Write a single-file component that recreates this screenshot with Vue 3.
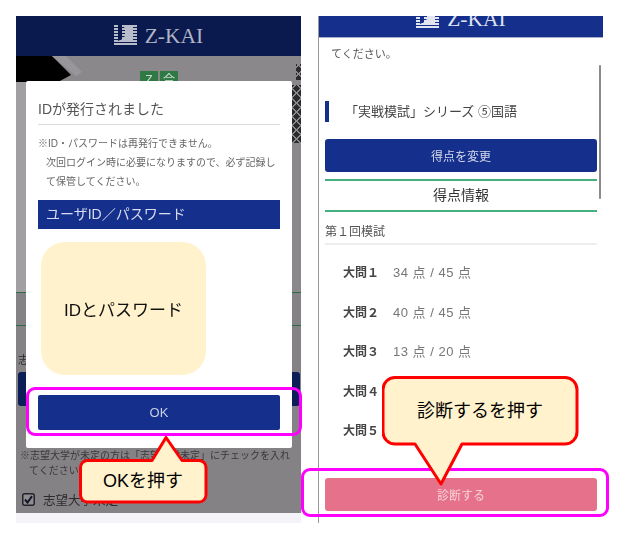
<script setup>
const scores = [
  { name: '大問１', value: '34 点 / 45 点' },
  { name: '大問２', value: '40 点 / 45 点' },
  { name: '大問３', value: '13 点 / 20 点' },
  { name: '大問４', value: '' },
  { name: '大問５', value: '' },
]
const stripes = [0, 3, 6, 9, 12, 15, 18]
</script>

<template>
  <main class="page">
    <section class="phone left">
      <header class="head dark">
        <svg class="logo" viewBox="0 0 23 22">
          <rect v-for="y in stripes" :key="y" x="0" :y="y" width="23" height="2" fill="#b9bcca" />
          <path d="M4 0h4v14l-4 2z" fill="#0a1a4e" />
          <path d="M9 0h10v15H7l4-4V4z" fill="#b9bcca" />
        </svg>
        <span class="brand">Z-KAI</span>
      </header>
      <div class="behind">
        <div class="hero">
          <div class="black"></div>
          <div class="streak"></div>
          <div class="side"></div>
          <div class="badges"><span>Z</span><span>合</span></div>
          <div class="keys top"></div>
          <div class="keys"></div>
        </div>
        <div class="hline"></div>
        <div class="hline second"></div>
        <p class="shi">志望大学</p>
        <div class="navy"></div>
        <p class="note">※志望大学が未定の方は「志望大学未定」にチェックを入れてください</p>
        <div class="check">
          <svg class="box" viewBox="0 0 13 13">
            <rect x="0.75" y="0.75" width="11.5" height="11.5" rx="2" fill="#8f8d90" stroke="#23242c" stroke-width="1.5" />
            <path d="M3 6.5l2.5 3L10 3.2" fill="none" stroke="#15182a" stroke-width="2" />
          </svg>
          <span>志望大学未定</span>
        </div>
      </div>
      <div class="foot"></div>
      <div class="modal">
        <h2>IDが発行されました</h2>
        <p class="info">※ID・パスワードは再発行できません。</p>
        <p class="info indent">次回ログイン時に必要になりますので、必ず記録して保管してください。</p>
        <div class="bar">ユーザID／パスワード</div>
        <div class="secret">IDとパスワード</div>
        <button class="ok">OK</button>
      </div>
    </section>

    <section class="phone right">
      <header class="head blue">
        <svg class="logo" viewBox="0 0 23 22">
          <rect v-for="y in stripes" :key="y" x="0" :y="y" width="23" height="2" fill="#e3e6f0" />
          <path d="M4 0h4v14l-4 2z" fill="#15308c" />
          <path d="M9 0h10v15H7l4-4V4z" fill="#e3e6f0" />
        </svg>
        <span class="brand light">Z-KAI</span>
      </header>
      <div class="scroll">
        <p class="cut">てください。</p>
        <h3 class="series">「実戦模試」シリーズ ⑤国語</h3>
        <button class="change">得点を変更</button>
        <div class="score-title">得点情報</div>
        <div class="round">第１回模試</div>
        <ul class="scores">
          <li v-for="s in scores" :key="s.name"><b>{{ s.name }}</b><span>{{ s.value }}</span></li>
        </ul>
        <button class="diag">診断する</button>
        <i class="thumb"></i>
      </div>
    </section>

    <div class="mark mark-ok"></div>
    <div class="mark mark-diag"></div>

    <div class="callout call-ok">
      <svg viewBox="0 0 130 70" width="130" height="70">
        <path d="M8.5 24.5H73L87 1.5L103 24.5H120a7 7 0 0 1 7 7V59a7 7 0 0 1-7 7H8.5a7 7 0 0 1-7-7V31.5a7 7 0 0 1 7-7z" fill="#fff2cc" stroke="#ff0000" stroke-width="3" stroke-linejoin="round" />
      </svg>
      <span>OKを押す</span>
    </div>
    <div class="callout call-diag">
      <svg viewBox="0 0 198 112" width="198" height="112">
        <path d="M13 1.5H183a12 12 0 0 1 12 12V56a12 12 0 0 1-12 12H80L59 108L33 68H13a12 12 0 0 1-12-12V13.5a12 12 0 0 1 12-12z" fill="#fff2cc" stroke="#ff0000" stroke-width="3" stroke-linejoin="round" />
      </svg>
      <span>診断するを押す</span>
    </div>
  </main>
</template>

<style scoped>
.page {
  position: relative;
  width: 629px;
  height: 534px;
  display: flex;
  gap: 17px;
  padding: 16px 0 0 16px;
  box-sizing: border-box;
  background: #fff;
  overflow: hidden;
  font-family: "Liberation Sans", "Noto Sans CJK JP", sans-serif;
  color: #555;
}
.phone {
  position: relative;
  width: 285px;
  height: 507px;
  display: flex;
  flex-direction: column;
  box-sizing: border-box;
  overflow: hidden;
}
.head {
  display: flex;
  align-items: center;
  justify-content: center;
  gap: 8px;
  flex: none;
  box-sizing: border-box;
  overflow: hidden;
}
.dark { height: 40px; background: #0a1a4e; }
.blue { height: 22px; padding: 0 0 16px 0; background: #15308c; border-bottom: 1px solid #a9afc8; }
.logo { width: 23px; height: 22px; flex: none; }
.brand {
  font-family: "Liberation Serif", serif;
  font-size: 21.5px;
  line-height: 24px;
  color: #b0b4c4;
  flex: none;
}
.light { color: #dfe2ee; }

.behind {
  flex: 1;
  background: #848285;
  display: flex;
  flex-direction: column;
  filter: blur(0.3px);
}
.hero { position: relative; height: 236px; flex: none; overflow: hidden; background: #8a888b; }
.black {
  position: absolute; left: 0; top: 0;
  width: 55px; height: 26px;
  background: #000;
  clip-path: polygon(0 0, 36px 0, 55px 19px, 42px 26px, 0 26px);
}
.streak {
  position: absolute; left: 36px; top: 0;
  width: 30px; height: 26px;
  background: #98969a;
  clip-path: polygon(0 0, 14px 0, 30px 16px, 24px 20px);
}
.side { position: absolute; left: 0; top: 26px; width: 10px; height: 210px; background: #a19fa2; }
.badges { position: absolute; left: 124px; top: 15px; display: flex; gap: 2px; }
.badges span {
  width: 18px; height: 18px;
  background: #2f7a44;
  color: #cfd8cf;
  font-size: 12px;
  line-height: 18px;
  text-align: center;
}
.keys {
  position: absolute; right: 0; top: 29px;
  width: 9px; height: 58px;
  background:
    repeating-linear-gradient(45deg, transparent 0 5px, #8a888b 5px 6.5px),
    repeating-linear-gradient(-45deg, transparent 0 5px, #8a888b 5px 6.5px),
    #2b2a2c;
}
.keys.top { top: 8px; height: 16px; width: 5px; }
.hline { height: 1px; background: #2f6b47; flex: none; }
.second { margin-top: 32px; }
.shi { margin: 27px 0 0 2px; font-size: 11px; line-height: 14px; color: #2b2a2c; white-space: nowrap; overflow: hidden; height: 14px; }
.navy { margin: 5px 1px 0 2px; height: 34px; background: #0b1e57; border-radius: 3px; flex: none; }
.note {
  margin: 42px 6px 0 4px;
  padding-left: 9px;
  text-indent: -9px;
  font-size: 10px;
  line-height: 15px;
  color: #3a383a;
}
.check { display: flex; align-items: center; gap: 8px; margin: 12px 0 0 6px; font-size: 12.5px; color: #2d2b2d; }
.box { width: 13px; height: 13px; flex: none; }
.foot { height: 10px; background: #f5f3f8; flex: none; }

.modal {
  position: absolute;
  left: 10px;
  top: 65px;
  width: 266px;
  height: 367px;
  box-sizing: border-box;
  padding: 12px 12px 0;
  background: #fff;
  border-radius: 2px;
  filter: blur(0.3px);
}
.modal h2 {
  margin: 0;
  height: 32px;
  box-sizing: border-box;
  border-bottom: 1px solid #dcdcdc;
  font-size: 14px;
  line-height: 32px;
  font-weight: 400;
  color: #555;
}
.info { margin: 0; font-size: 10px; line-height: 19px; color: #666; }
.modal h2 + .info { margin-top: 9px; }
.indent { padding-left: 8px; }
.bar {
  margin-top: 9px;
  height: 29px;
  background: #15308c;
  color: #d8dcee;
  font-size: 14px;
  line-height: 29px;
  padding-left: 8px;
}
.secret {
  width: 165px;
  height: 133px;
  margin: 13px 0 0 3px;
  background: #fff2cc;
  border-radius: 24px;
  color: #111;
  font-size: 17px;
  display: flex;
  align-items: center;
  justify-content: center;
}
.ok {
  display: block;
  width: 100%;
  height: 35px;
  margin-top: 20px;
  background: #15308c;
  border: 0;
  border-radius: 2px;
  color: #c9cfe4;
  font: inherit;
  font-size: 13px;
}

.right { border-left: 1px solid #999; }
.scroll { position: relative; flex: 1; padding: 0 6px; display: flex; flex-direction: column; filter: blur(0.3px); }
.cut { margin: 8px 0 0 6px; font-size: 11px; line-height: 16px; color: #555; }
.series {
  margin: 39px 0 0;
  height: 21px;
  border-left: 4px solid #15308c;
  padding-left: 16px;
  font-size: 13px;
  line-height: 21px;
  font-weight: 400;
  color: #444;
  white-space: nowrap;
}
.change, .diag {
  display: block;
  width: 272px;
  height: 33px;
  border: 0;
  border-radius: 3px;
  color: #d5d9ea;
  font: inherit;
  font-size: 12px;
}
.change { margin-top: 17px; background: #15308c; flex: none; }
.score-title {
  width: 272px;
  height: 33px;
  margin-top: 7px;
  border-top: 2px solid #45b07f;
  border-bottom: 2px solid #45b07f;
  box-sizing: border-box;
  text-align: center;
  font-size: 14px;
  line-height: 29px;
  color: #333;
  flex: none;
}
.round {
  width: 272px;
  height: 33px;
  box-sizing: border-box;
  border-bottom: 2px solid #eee;
  font-size: 12px;
  line-height: 40px;
  color: #555;
  flex: none;
}
.scores { list-style: none; margin: 7px 0 0; padding: 0 0 0 18px; }
.scores li { display: flex; gap: 16px; height: 39.5px; align-items: center; font-size: 13px; letter-spacing: 0.5px; color: #777; }
.scores b { color: #444; width: 34px; font-size: 12px; letter-spacing: 0; white-space: nowrap; }
.diag { position: absolute; left: 6px; bottom: 12px; background: #e5728a; color: #f6d3da; }
.thumb { position: absolute; left: 280px; top: 27px; width: 2px; height: 134px; background: #8a8a8a; border-radius: 1px; }

.mark {
  position: absolute;
  box-sizing: border-box;
  border: 3px solid #ff00ff;
  border-radius: 9px;
}
.mark-ok { left: 26px; top: 387px; width: 276px; height: 49px; }
.mark-diag { left: 301px; top: 468px; width: 308px; height: 49px; }

.callout { position: absolute; }
.callout svg { display: block; }
.callout span {
  position: absolute;
  left: 0;
  right: 0;
  text-align: center;
  color: #000;
  white-space: nowrap;
}
.call-ok { left: 79px; top: 436px; width: 130px; height: 70px; }
.call-ok span { top: 24px; height: 42px; line-height: 42px; font-size: 18px; left: 2px; right: 4px; }
.call-diag { left: 382px; top: 376px; width: 198px; height: 112px; }
.call-diag span { top: 1px; height: 68px; line-height: 68px; font-size: 18px; left: 1px; right: 3px; }
</style>
<style>
html, body { margin: 0; background: #fff; }
</style>
